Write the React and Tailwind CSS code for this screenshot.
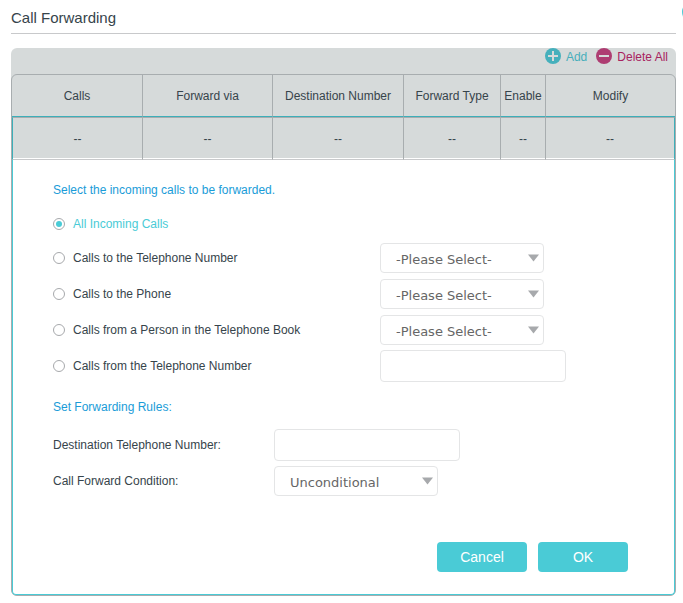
import React from "react";

const columns = [
  { label: "Calls", width: "w-[131px]" },
  { label: "Forward via", width: "w-[130px]" },
  { label: "Destination Number", width: "w-[131px]" },
  { label: "Forward Type", width: "w-[97px]" },
  { label: "Enable", width: "w-[45px]" },
  { label: "Modify", width: "w-[129px]" },
];

const sources = [
  { id: "telephone-number", label: "Calls to the Telephone Number", control: "select" },
  { id: "phone", label: "Calls to the Phone", control: "select" },
  { id: "person", label: "Calls from a Person in the Telephone Book", control: "select" },
  { id: "from-number", label: "Calls from the Telephone Number", control: "input" },
];

function SelectBox({ id, option, ...props }) {
  return (
    <div className="relative">
      <select
        id={id}
        {...props}
        className="block h-[30px] w-[164px] appearance-none rounded border border-[#e4e5e6] bg-white pt-1 pr-6 pl-[15px] font-['DejaVu_Sans',Verdana,sans-serif] text-[13px] text-[#666]"
      >
        <option>{option}</option>
      </select>
      <svg
        className="pointer-events-none absolute top-[11px] right-[5px] h-2 w-[11px]"
        viewBox="0 0 11 8"
        aria-hidden="true"
      >
        <path d="M0 0.5H11L5.5 7.5Z" fill="#a7a9ac" />
      </svg>
    </div>
  );
}

function TextBox(props) {
  return (
    <input
      type="text"
      {...props}
      className="block h-8 w-[186px] rounded border border-[#e4e5e6] bg-white px-3.5 text-[13px]"
    />
  );
}

function Radio({ id, defaultChecked }) {
  return (
    <input
      type="radio"
      name="source"
      id={id}
      defaultChecked={defaultChecked}
      className="mr-2 flex size-3 appearance-none items-center justify-center rounded-full border border-[#a7a9ac] bg-white before:size-1.5 before:rounded-full checked:before:bg-[#4acbd6]"
    />
  );
}

function ActionIcon({ fill, plus }) {
  return (
    <svg className="size-4" viewBox="0 0 16 16" aria-hidden="true">
      <circle cx="8" cy="8" r="8" fill={fill} />
      <path
        d={plus ? "M3 8H13M8 3V13" : "M3 8H13"}
        stroke="#d6dada"
        strokeWidth="2"
      />
    </svg>
  );
}

function ForwardingForm() {
  return (
    <form
      className="pt-3 pr-[46px] pb-[22px] pl-10 text-left"
      onSubmit={(e) => e.preventDefault()}
    >
      <h2 className="leading-9 text-[#1a9cd8]">
        Select the incoming calls to be forwarded.
      </h2>
      <div className="flex h-8 items-center">
        <Radio id="all" defaultChecked />
        <label htmlFor="all" className="text-[#4acbd6]">
          All Incoming Calls
        </label>
      </div>
      {sources.map((source) => (
        <div key={source.id} className="flex h-9 items-center">
          <div className="flex w-[327px] items-center">
            <Radio id={source.id} />
            <label htmlFor={source.id}>{source.label}</label>
          </div>
          {source.control === "select" ? (
            <SelectBox aria-label={source.label} option="-Please Select-" />
          ) : (
            <TextBox aria-label={source.label} />
          )}
        </div>
      ))}
      <h2 className="mt-[3px] leading-10 text-[#1a9cd8]">Set Forwarding Rules:</h2>
      <div className="flex h-9 items-center">
        <label htmlFor="destination" className="w-[221px]">
          Destination Telephone Number:
        </label>
        <TextBox id="destination" />
      </div>
      <div className="flex h-9 items-center">
        <label htmlFor="condition" className="w-[221px]">
          Call Forward Condition:
        </label>
        <SelectBox id="condition" option="Unconditional" />
      </div>
      <div className="mt-[43px] flex justify-end gap-[11px] text-sm text-white">
        <button type="button" className="h-[30px] w-[90px] rounded bg-[#4acbd6]">
          Cancel
        </button>
        <button type="submit" className="h-[30px] w-[90px] rounded bg-[#4acbd6]">
          OK
        </button>
      </div>
    </form>
  );
}

export default function App() {
  return (
    <main className="relative overflow-x-hidden bg-white pr-[7px] pb-[7px] pl-[11px] font-['Liberation_Sans',Arial,sans-serif] text-xs text-[#36444b]">
      <button
        type="button"
        aria-label="Help"
        className="absolute top-0.5 -right-[19px] size-5 rounded-full bg-[#4acbd6]"
      />
      <h1 className="h-[34px] border-b border-[#c8c9cb] pt-1.5 text-[15px] leading-6">
        Call Forwarding
      </h1>

      <section className="mt-3.5 rounded-md bg-[#d6dada]">
        <div className="flex h-[26px] items-start justify-end gap-2 pr-2 leading-[18px]">
          <button type="button" className="flex items-start gap-[5px] pr-px text-[#47aebb]">
            <ActionIcon fill="#45b0bc" plus />
            <span>Add</span>
          </button>
          <button type="button" className="flex items-start gap-[5px] text-[#a8225f]">
            <ActionIcon fill="#ae3d72" />
            <span>Delete All</span>
          </button>
        </div>

        <div className="rounded-md border border-[#a8adaf]">
          <table className="w-full table-fixed border-separate border-spacing-0 text-center">
            <thead>
              <tr className="h-[42px]">
                {columns.map((column) => (
                  <th
                    key={column.label}
                    scope="col"
                    className={`${column.width} border-r border-b border-r-[#a8adaf] border-b-[#3dafb9] font-normal whitespace-nowrap last:border-r-0`}
                  >
                    {column.label}
                  </th>
                ))}
              </tr>
            </thead>
            <tbody>
              <tr className="h-[43px]">
                {columns.map((column) => (
                  <td
                    key={column.label}
                    className="border-t border-r border-b border-t-[#a8adaf] border-r-[#a8adaf] border-b-[#c8c9cb] shadow-[inset_0_-1px_0_white] first:border-l first:border-l-[#3dafb9] last:border-r-[#3dafb9]"
                  >
                    --
                  </td>
                ))}
              </tr>
              <tr>
                <td
                  colSpan={6}
                  className="rounded-b border-r border-b border-l border-[#4acbd6] bg-white p-0"
                >
                  <ForwardingForm />
                </td>
              </tr>
            </tbody>
          </table>
        </div>
      </section>
    </main>
  );
}
